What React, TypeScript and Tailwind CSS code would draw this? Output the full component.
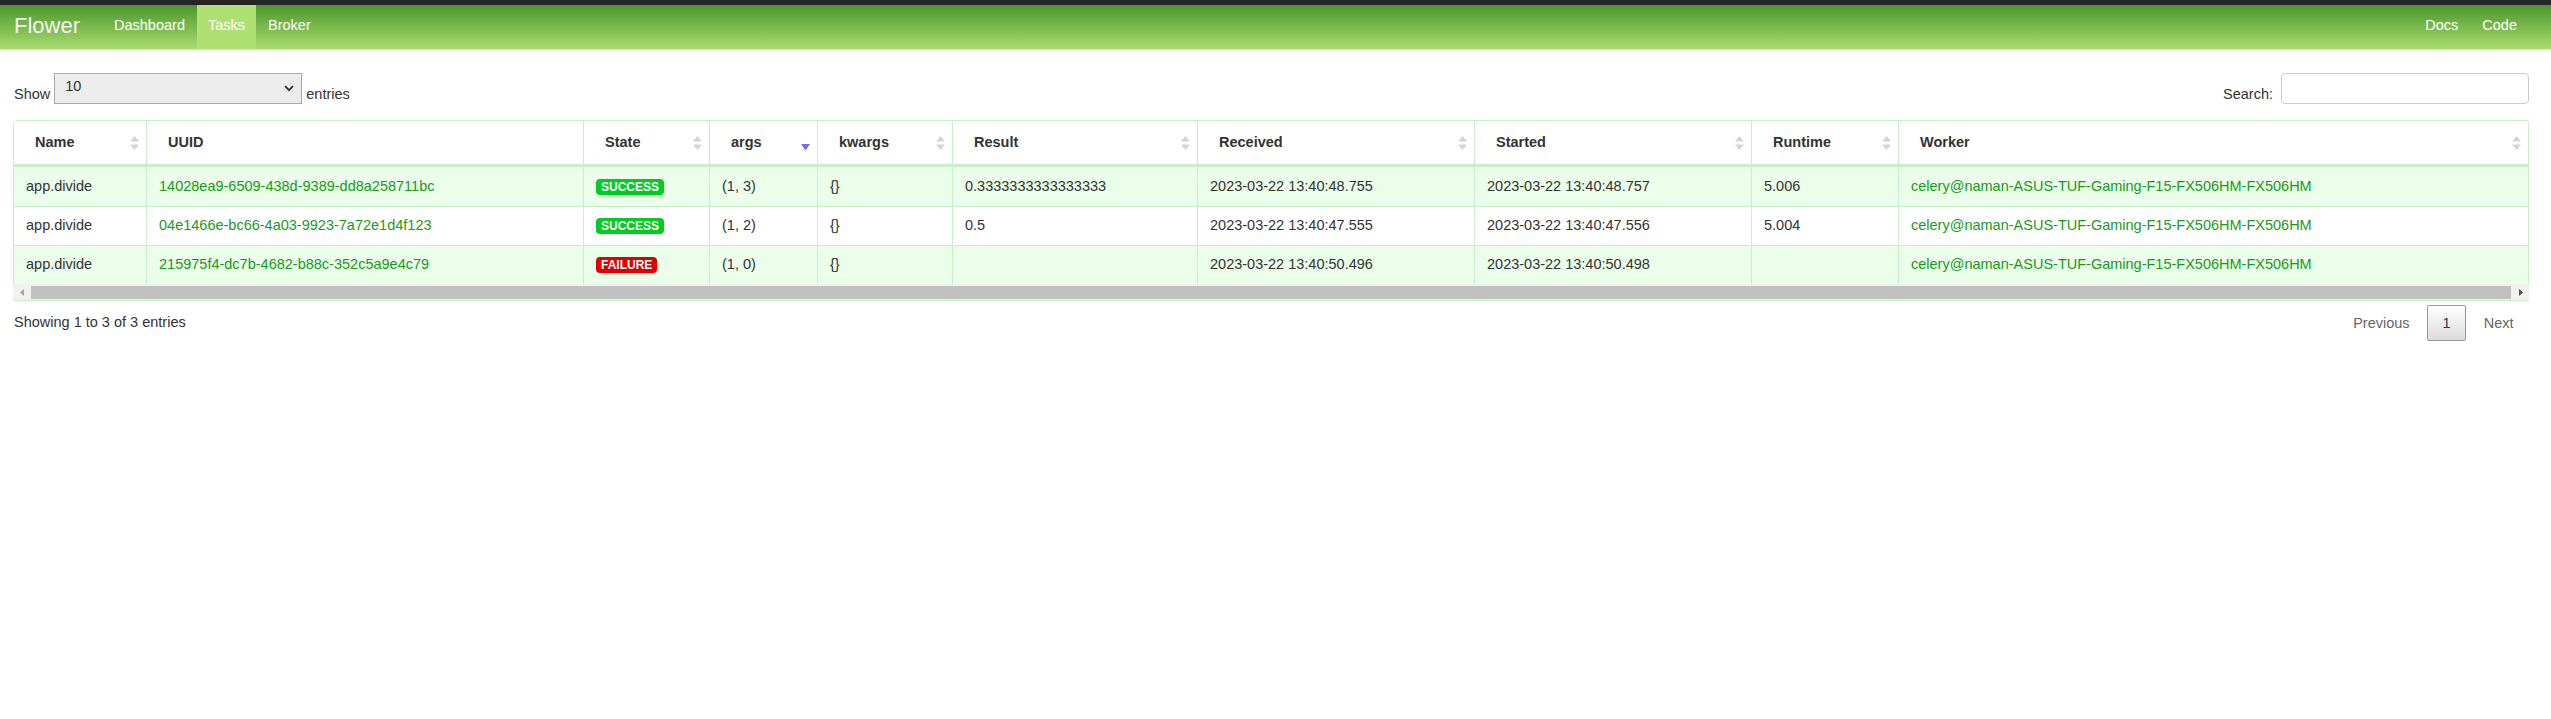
import React from "react";

type Task = {
  name: string;
  uuid: string;
  state: "SUCCESS" | "FAILURE";
  args: string;
  kwargs: string;
  result: string;
  received: string;
  started: string;
  runtime: string;
  worker: string;
};

const tasks: Task[] = [
  {
    name: "app.divide",
    uuid: "14028ea9-6509-438d-9389-dd8a258711bc",
    state: "SUCCESS",
    args: "(1, 3)",
    kwargs: "{}",
    result: "0.3333333333333333",
    received: "2023-03-22 13:40:48.755",
    started: "2023-03-22 13:40:48.757",
    runtime: "5.006",
    worker: "celery@naman-ASUS-TUF-Gaming-F15-FX506HM-FX506HM",
  },
  {
    name: "app.divide",
    uuid: "04e1466e-bc66-4a03-9923-7a72e1d4f123",
    state: "SUCCESS",
    args: "(1, 2)",
    kwargs: "{}",
    result: "0.5",
    received: "2023-03-22 13:40:47.555",
    started: "2023-03-22 13:40:47.556",
    runtime: "5.004",
    worker: "celery@naman-ASUS-TUF-Gaming-F15-FX506HM-FX506HM",
  },
  {
    name: "app.divide",
    uuid: "215975f4-dc7b-4682-b88c-352c5a9e4c79",
    state: "FAILURE",
    args: "(1, 0)",
    kwargs: "{}",
    result: "",
    received: "2023-03-22 13:40:50.496",
    started: "2023-03-22 13:40:50.498",
    runtime: "",
    worker: "celery@naman-ASUS-TUF-Gaming-F15-FX506HM-FX506HM",
  },
];

const columns: { label: string; sort: "both" | "desc" | "none" }[] = [
  { label: "Name", sort: "both" },
  { label: "UUID", sort: "none" },
  { label: "State", sort: "both" },
  { label: "args", sort: "desc" },
  { label: "kwargs", sort: "both" },
  { label: "Result", sort: "both" },
  { label: "Received", sort: "both" },
  { label: "Started", sort: "both" },
  { label: "Runtime", sort: "both" },
  { label: "Worker", sort: "both" },
];

const gridCols = "grid grid-cols-[132px_437px_126px_108px_135px_245px_277px_277px_147px_1fr]";

function SortIcon({ sort }: { sort: "both" | "desc" }) {
  return (
    <svg width="9" height="16" viewBox="0 0 9 16" className="shrink-0">
      {sort === "both" && <path d="M0 6.5 L4.5 1 L9 6.5 Z" fill="#d3d3d3" />}
      {sort === "both" ? (
        <path d="M0 9.5 L9 9.5 L4.5 15 Z" fill="#d3d3d3" />
      ) : (
        <path d="M0 9 L9 9 L4.5 15.5 Z" fill="#7c6de4" />
      )}
    </svg>
  );
}

function NavBar() {
  return (
    <div>
      <div className="h-[5px] bg-[#252525]" />
      <div className="flex h-[44px] items-stretch justify-between bg-gradient-to-b from-[#4b972a] to-[#a8dc6f] shadow-[0_1px_2px_rgba(0,0,0,0.18)]">
        <div className="flex items-stretch">
          <span className="flex items-center pl-[14px] pr-[22px] pb-[3px] text-[22px] text-[#f4f4f4]">Flower</span>
          <a className="flex items-center px-[12px] pb-[3px] text-white">Dashboard</a>
          <a className="flex items-center bg-[#aee073] px-[11px] pb-[3px] text-white">Tasks</a>
          <a className="flex items-center px-[12px] pb-[3px] text-white">Broker</a>
        </div>
        <div className="flex items-stretch pr-[22px]">
          <a className="flex items-center px-[12px] pb-[3px] text-white">Docs</a>
          <a className="flex items-center px-[12px] pb-[3px] text-white">Code</a>
        </div>
      </div>
    </div>
  );
}

function Badge({ state }: { state: Task["state"] }) {
  return (
    <span
      className={`inline-flex h-[16px] items-center rounded-[4px] px-[5px] text-[12px] font-bold leading-none text-white ${
        state === "SUCCESS" ? "bg-[#00cc22]" : "bg-[#e00000]"
      }`}
    >
      {state}
    </span>
  );
}

export default function App() {
  return (
    <div className="min-h-[719px] bg-white font-['Liberation_Sans',Arial,sans-serif] text-[14.5px] text-[#333]">
      <NavBar />

      <div className="pl-[13px] pr-[22px]">
        {/* length + search */}
        <div className="mt-[24px] flex items-end justify-between">
          <div className="flex items-end">
            <span className="pl-[1px] leading-[20px]">Show</span>
            <div className="mx-[4px] flex h-[31px] w-[248px] items-center justify-between border border-[#a9a9a9] bg-[#ececec] pl-[10px] pr-[7px]">
              <span className="-mt-[3px]">10</span>
              <svg width="10" height="7" viewBox="0 0 10 7">
                <path d="M1 1.2 L5 5.2 L9 1.2" fill="none" stroke="#333" strokeWidth="1.8" />
              </svg>
            </div>
            <span className="leading-[20px]">entries</span>
          </div>
          <div className="flex items-end">
            <span className="mr-[8px] leading-[20px]">Search:</span>
            <div className="h-[31px] w-[248px] rounded-[4px] border border-[#cccccc] bg-white" />
          </div>
        </div>

        {/* table */}
        <div className="mt-[16px]">
          <div className="rounded-t-[4px] border-x border-t border-[#c4f2c4]">
            <div className={`${gridCols} h-[46px] border-b-[3px] border-[#c4f2c4] bg-white`}>
              {columns.map((c, i) => (
                <div
                  key={c.label}
                  className={`flex items-center justify-between pl-[21px] pr-[7px] font-bold ${i > 0 ? "border-l border-[#c4f2c4]" : ""}`}
                >
                  <span>{c.label}</span>
                  {c.sort !== "none" && <SortIcon sort={c.sort} />}
                </div>
              ))}
            </div>
            {tasks.map((t, r) => {
              const cells = [
                <span>{t.name}</span>,
                <span className="text-[#199a19]">{t.uuid}</span>,
                <Badge state={t.state} />,
                <span>{t.args}</span>,
                <span>{t.kwargs}</span>,
                <span>{t.result}</span>,
                <span>{t.received}</span>,
                <span>{t.started}</span>,
                <span>{t.runtime}</span>,
                <span className="text-[#199a19]">{t.worker}</span>,
              ];
              return (
                <div
                  key={t.uuid}
                  className={`${gridCols} h-[39px] ${r > 0 ? "border-t border-[#c4f2c4]" : ""} ${
                    r % 2 === 0 ? "bg-[#eafeea]" : "bg-white"
                  }`}
                >
                  {cells.map((cell, i) => (
                    <div
                      key={i}
                      className={`flex items-center whitespace-nowrap pl-[12px] ${i > 0 ? "border-l border-[#c4f2c4]" : ""}`}
                    >
                      {cell}
                    </div>
                  ))}
                </div>
              );
            })}
          </div>

          {/* horizontal scrollbar */}
          <div className="flex h-[17px] items-center border-b border-[#c4f2c4] bg-[#f1f1f1]">
            <div className="flex w-[18px] justify-center">
              <svg width="5" height="7" viewBox="0 0 5 7">
                <path d="M4 0 L0 3.5 L4 7 Z" fill="#a3a3a3" />
              </svg>
            </div>
            <div className="h-[13px] flex-1 bg-[#c1c1c1]" />
            <div className="flex w-[18px] justify-center">
              <svg width="5" height="7" viewBox="0 0 5 7">
                <path d="M1 0 L5 3.5 L1 7 Z" fill="#505050" />
              </svg>
            </div>
          </div>
        </div>

        {/* info + pagination */}
        <div className="flex items-start justify-between">
          <div className="pl-[1px] pt-[11px] leading-[20px]">Showing 1 to 3 of 3 entries</div>
          <div className="flex pt-[4px]">
            <span className="ml-[2px] border border-transparent px-[14.5px] py-[7px] leading-[20px] text-[#666]">Previous</span>
            <span className="ml-[2px] rounded-[2px] border border-[#979797] bg-gradient-to-b from-white to-[#dcdcdc] px-[14.5px] py-[7px] leading-[20px] text-[#333]">
              1
            </span>
            <span className="ml-[2px] border border-transparent px-[14.5px] py-[7px] leading-[20px] text-[#666]">Next</span>
          </div>
        </div>
      </div>
    </div>
  );
}
